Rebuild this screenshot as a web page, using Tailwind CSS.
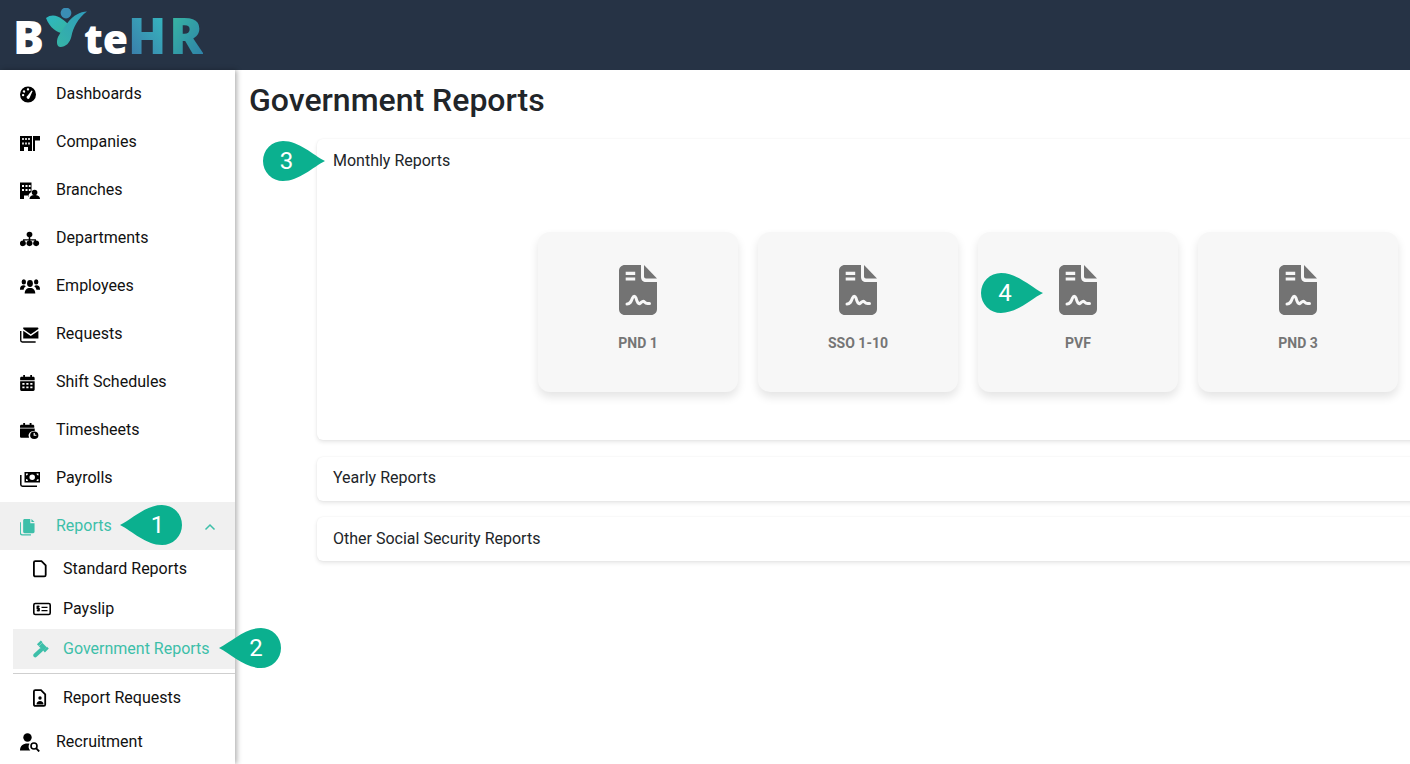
<!doctype html>
<html>
<head>
<meta charset="utf-8">
<script src="https://cdn.jsdelivr.net/npm/@tailwindcss/browser@4"></script>
</head>
<body class="font-['Roboto',sans-serif] bg-white">
<div class="relative w-[1410px] h-[764px] overflow-hidden flex flex-col">
  <header class="h-[70px] shrink-0 bg-[#263345] flex items-center pl-[13px]">
    <div class="flex items-baseline font-['Open_Sans',sans-serif] font-extrabold leading-none">
      <span class="text-white text-[46px] w-[32px]">B</span>
      <svg class="w-[44px] h-[42px] self-center -mt-[12px] shrink-0" viewBox="0 0 44 42">
        <defs>
          <linearGradient id="g1" x1="0" y1="0" x2="1" y2="1"><stop offset="0" stop-color="#2db8c4"/><stop offset="1" stop-color="#37b49e"/></linearGradient>
          <linearGradient id="g2" x1="1" y1="0" x2="0" y2="1"><stop offset="0" stop-color="#2f9cbc"/><stop offset="1" stop-color="#36b5a6"/></linearGradient>
        </defs>
        <circle cx="21" cy="5" r="5.400" fill="#3a8db5"/>
        <path fill="url(#g1)" d="M1 10C6 6 12 7 17 11C20 13 22 15 24 17L20 25C14 26 5 21 1 10Z"/>
        <path fill="url(#g2)" d="M42 3.500C35 3.500 28 8 24 13C20 18 16 23 13 29C11 34 12 39 15.500 39C20.500 39 25 35 26.500 28C28 20 33 10 42 3.500Z"/>
      </svg>
      <span class="text-white text-[41px] -ml-[5px] w-[44px]">te</span>
      <span class="text-[50px] bg-linear-to-tr from-[#3a78a8] to-[#33bcc0] bg-clip-text text-transparent mr-[3px]">H</span>
      <span class="text-[50px] bg-linear-to-br from-[#39bca0] to-[#2f7fa8] bg-clip-text text-transparent">R</span>
    </div>
  </header>
  <div class="flex flex-1 min-h-0">
    <aside class="w-[235px] shrink-0 bg-white shadow-[2px_0_5px_rgba(0,0,0,0.3)] z-10 text-[16px] text-[#111] overflow-hidden">
      <div class="flex items-center h-12 pl-5 gap-4">
        <svg class="w-5 h-5 shrink-0" viewBox="0 0 20 20"><g transform="translate(-2,0.500)"><path fill-rule="evenodd" d="M10 2a8 8 0 1 1 0 16a8 8 0 0 1 0-16ZM9 4.200a1.200 1.200 0 1 0 2 0a1.200 1.200 0 0 0-2 0ZM5 6.300a1.200 1.200 0 1 0 2.200 0.600a1.200 1.200 0 0 0-2.200-.6ZM3.900 10.600a1.200 1.200 0 1 0 2.400 0a1.200 1.200 0 0 0-2.400 0ZM8.600 12.600a1.600 1.600 0 0 0 2.800 1.200L14.600 6.600L13.600 6L9.600 11.200a1.600 1.600 0 0 0-1 1.400Z"/></g></svg>
        <span>Dashboards</span>
      </div>
      <div class="flex items-center h-12 pl-5 gap-4">
        <svg class="w-5 h-5 shrink-0" viewBox="0 0 20 20"><path fill-rule="evenodd" d="M0 4h12v15H8v-4H4v4H0V4ZM2.200 6v2h1.600V6H2.200Zm3 0v2h1.600V6H5.200Zm3 0v2h1.600V6H8.200ZM2.200 10.500v2h1.600v-2H2.200Zm3 0v2h1.600v-2H5.200Zm3 0v2h1.600v-2H8.200Z"/><path d="M13 4h7v4.500h-5V19h-2V4Z"/></svg>
        <span>Companies</span>
      </div>
      <div class="flex items-center h-12 pl-5 gap-4">
        <svg class="w-5 h-5 shrink-0" viewBox="0 0 20 20"><g transform="translate(0,1)"><path fill-rule="evenodd" d="M0 1.500h11.500V11c-2 .8-3.200 2.600-3.200 5H8V14.500H4V18H0V1.500ZM2 4v2h2V4H2Zm3.500 0v2h2V4h-2Zm3.300 0v2h1.800V4H9ZM2 8v2h2V8H2Zm3.500 0v2h2V8h-2Zm3.300 0v2h1.800V8H9Z"/><circle cx="14.600" cy="11.500" r="2.800"/><path d="M9.500 18c0-2.800 2-4 5-4s5.500 1.200 5.500 4H9.500Z"/></g></svg>
        <span>Branches</span>
      </div>
      <div class="flex items-center h-12 pl-5 gap-4">
        <svg class="w-5 h-5 shrink-0" viewBox="0 0 20 20"><g transform="translate(0,2.500) scale(.95,.9)"><circle cx="10" cy="4.500" r="3"/><path d="M9.200 7h1.600v2.800h6V12h-1.500v-.8h-4.500V12H9.200v-.8H4.800v.8H3.200V9.800h6Z"/><circle cx="3" cy="14.300" r="3.100"/><circle cx="10" cy="14.300" r="3.100"/><circle cx="17" cy="14.300" r="3.100"/></g></svg>
        <span>Departments</span>
      </div>
      <div class="flex items-center h-12 pl-5 gap-4">
        <svg class="w-5 h-5 shrink-0" viewBox="0 0 20 20"><g transform="translate(0,-1.500) scale(1,1.200)"><circle cx="3.800" cy="6.200" r="2.200"/><circle cx="16.200" cy="6.200" r="2.200"/><circle cx="10" cy="7.500" r="2.900"/><path d="M0 12.200c0-2 1.300-3.200 3.500-3.200c1 0 1.800.3 2.300.8c-1.300.7-2 1.700-2.200 2.900H0ZM20 12.200c0-2-1.300-3.200-3.500-3.200c-1 0-1.800.3-2.300.8c1.300.7 2 1.700 2.200 2.900H20ZM4.700 15.800c0-3 2-4.600 5.300-4.600s5.300 1.600 5.300 4.600H4.700Z"/></g></svg>
        <span>Employees</span>
      </div>
      <div class="flex items-center h-12 pl-5 gap-4">
        <svg class="w-5 h-5 shrink-0" viewBox="0 0 20 20"><g transform="translate(0,.500) scale(.92,1)"><path d="M3.500 3h15.500c.6 0 1 .4 1 1v.6l-8.300 5.200L3.500 4.600V3Z"/><path d="M3.500 6.200l8.200 5.200 8.300-5.200v7.800H3.500V6.200Z"/><path fill="none" stroke="#000" stroke-width="1.500" d="M.800 6.500v9.300c0 1 .7 1.700 1.700 1.700H17"/></g></svg>
        <span>Requests</span>
      </div>
      <div class="flex items-center h-12 pl-5 gap-4">
        <svg class="w-5 h-5 shrink-0" viewBox="0 0 20 20"><g transform="translate(-.3,2.600) scale(.88,.88)"><path fill-rule="evenodd" d="M4 .500h2v2h6v-2h2v2h1.500c.9 0 1.500.7 1.500 1.500v2.500H.500V4c0-.8.7-1.500 1.500-1.500h2V.500ZM.500 7.500H17v9.500c0 .9-.7 1.500-1.500 1.500H2c-.9 0-1.500-.6-1.500-1.500V7.500ZM3 9.500v2h2.500v-2H3Zm4.500 0v2H10v-2H7.500Zm4.500 0v2h2.500v-2H12ZM3 13.500v2h2.500v-2H3Zm4.500 0v2H10v-2H7.500Zm4.500 0v2h2.500v-2H12Z"/></g></svg>
        <span>Shift Schedules</span>
      </div>
      <div class="flex items-center h-12 pl-5 gap-4">
        <svg class="w-5 h-5 shrink-0" viewBox="0 0 20 20"><g transform="translate(0,2.600) scale(.92,.84)"><path d="M3.500.500h2v2h5v-2h2v2h1.500c.9 0 1.500.7 1.500 1.500v2H0V4c0-.8.7-1.500 1.500-1.500h2V.500ZM0 7h16v3.200a5.500 5.500 0 0 0-6.200 7.800H1.500C.7 18 0 17.300 0 16.500V7Z"/><path fill-rule="evenodd" d="M15.500 10.500a4.500 4.500 0 1 1 0 9a4.500 4.500 0 0 1 0-9ZM14.800 12.500v3.300h3v-1.300h-1.700v-2h-1.300Z"/></g></svg>
        <span>Timesheets</span>
      </div>
      <div class="flex items-center h-12 pl-5 gap-4">
        <svg class="w-5 h-5 shrink-0" viewBox="0 0 20 20"><g transform="translate(0,1)"><path fill-rule="evenodd" d="M4.500 3H20v10.500H4.500V3ZM12.200 5.500a2.700 2.700 0 1 0 0 5.500a2.700 2.700 0 0 0 0-5.500ZM6 4.500v2a2 2 0 0 0 2-2H6Zm10.500 0a2 2 0 0 0 2 2v-2h-2ZM6 10v2h2a2 2 0 0 0-2-2Zm12.500 0a2 2 0 0 0-2 2h2v-2Z"/><path fill="none" stroke="#000" stroke-width="1.500" d="M.800 6v9.500c0 1 .7 1.700 1.700 1.700H17"/></g></svg>
        <span>Payrolls</span>
      </div>
      <div class="flex items-center h-12 pl-5 gap-4 bg-[#f0f0f0] text-[#3dbfa9] relative">
        <svg class="w-5 h-5 shrink-0" viewBox="0 0 20 20"><g transform="translate(-1.600,1.500) scale(.95)"><path fill="#3dbfa9" d="M6.500 1.500h6v4.500h4.500v9c0 .8-.7 1.500-1.500 1.500h-9c-.8 0-1.500-.7-1.500-1.500V3c0-.8.7-1.500 1.500-1.500ZM13.700 1.500l3.300 3.300h-3.300V1.500Z"/><path fill="none" stroke="#3dbfa9" stroke-width="1.300" d="M2 5v11c0 1.200.9 2.200 2.200 2.200h9"/></g></svg>
        <span>Reports</span>
        <svg class="absolute left-[204px] top-[21px] w-3 h-2" viewBox="0 0 12 8"><path fill="none" stroke="#3dbfa9" stroke-width="1.500" d="M1.500 6.500L6 2l4.500 4.500"/></svg>
      </div>
      <div class="flex items-center h-10 pl-[33px] gap-3 -mt-[1px]">
        <svg class="w-[18px] h-[18px] shrink-0" viewBox="0 0 18 18"><path fill="none" stroke="#000" stroke-width="1.800" d="M.9 2.500c0-.8.600-1.400 1.400-1.400h6.200l4.200 4.200v9.700c0 .8-.6 1.400-1.400 1.400H2.300c-.8 0-1.400-.6-1.400-1.400V2.500Z"/></svg>
        <span>Standard Reports</span>
      </div>
      <div class="flex items-center h-10 pl-[33px] gap-3">
        <svg class="w-[18px] h-[18px] shrink-0" viewBox="0 0 18 18"><rect x=".800" y="3.500" width="16.400" height="11" rx="1.500" fill="none" stroke="#000" stroke-width="1.600"/><path fill="none" stroke="#000" stroke-width="1.300" d="M6.500 6.500H4.200v2.100h2v2.100H3.800M5.100 5.600v6M8.500 7.300h6M8.500 10.700h6"/></svg>
        <span>Payslip</span>
      </div>
      <div class="flex items-center h-10 ml-[13px] pl-5 gap-3 bg-[#f0f0f0] text-[#3dbfa9]">
        <svg class="w-[18px] h-[18px] shrink-0" viewBox="0 0 18 18"><g fill="none" stroke="#3dbfa9"><path stroke-width="5" d="M7.500 4.500L12 9"/><path stroke-width="2.500" d="M4.800 5.200L8.700 1.300M11 11.500L14.900 7.600"/><path stroke-width="4" stroke-linecap="round" d="M8 10L2.300 15.300"/></g></svg>
        <span>Government Reports</span>
      </div>
      <div class="ml-[13px] mt-1 border-t border-[#cfcfcf]"></div>
      <div class="flex items-center h-12 pl-[33px] gap-3">
        <svg class="w-[18px] h-[18px] shrink-0" viewBox="0 0 18 18"><g transform="translate(-2,0)"><path fill="none" stroke="#000" stroke-width="1.800" d="M2.900 2.500c0-.8.600-1.400 1.400-1.400h5.700l4.200 4.200v10.200c0 .8-.6 1.400-1.400 1.400H4.300c-.8 0-1.400-.6-1.400-1.400V2.500Z"/><circle cx="9" cy="9" r="1.700"/><path d="M5.500 15.500c0-2.200 1.400-3.500 3.500-3.500s3.500 1.300 3.500 3.500h-7Z"/></g></svg>
        <span>Report Requests</span>
      </div>
      <div class="flex items-center h-10 pl-5 gap-4">
        <svg class="w-5 h-5 shrink-0" viewBox="0 0 20 20"><circle cx="7.500" cy="5.500" r="4.200"/><path d="M0 18.500c0-4.500 3-7 7.500-7c1 0 1.500.1 2 .3a5.500 5.500 0 0 0 .8 6.700H0Z"/><circle cx="14" cy="14" r="3" fill="none" stroke="#000" stroke-width="1.600"/><path stroke="#000" stroke-width="1.800" d="M16 16.200L19.200 19.500"/></svg>
        <span>Recruitment</span>
      </div>
    </aside>
    <main class="flex-1 min-w-0 pl-[14px] overflow-hidden text-[#212529]">
      <h1 class="text-[32px] leading-[38px] font-medium mt-[11px]">Government Reports</h1>
      <div class="ml-[68px] w-[1200px] mt-5 flex flex-col">
        <section class="h-[301px] bg-white rounded-md shadow-[0_2px_4px_rgba(0,0,0,0.1),0_0_2px_rgba(0,0,0,0.06)]">
          <div class="h-[44px] flex items-center pl-4 text-[16px]">Monthly Reports</div>
          <div class="flex gap-5 pl-[221px] mt-[49px]">
            <div class="w-[200px] h-[160px] bg-[#f7f7f7] rounded-xl shadow-[0_5px_10px_rgba(0,0,0,0.11)] flex flex-col items-center pt-[33px]">
              <svg class="w-[38px] h-[50px]" viewBox="0 0 38 50"><path fill="#737373" d="M5 0H22V12C22 15 24 17 27 17H38V44C38 47.500 35.500 50 32 50H6C2.500 50 0 47.500 0 44V6C0 2.500 2.500 0 6 0Z"/><path fill="#737373" d="M25 0L38 13.500H27C26 13.500 25 12.500 25 11.500V0Z"/><path fill="none" stroke="#f7f7f7" stroke-width="3.200" d="M6.700 8.300H16.200M6.700 14H16.200"/><path fill="none" stroke="#f7f7f7" stroke-width="3" stroke-linecap="round" d="M8 39C11 39 12 37 13.500 33C14.500 30.500 16 30.500 17 33C18 37 19.500 39.500 21 38.500C22.500 37.500 23.500 35.500 25 36.500C26 37.500 26.500 38.500 28.500 38.500H30.500"/></svg>
              <span class="mt-5 text-[14px] leading-4 font-bold text-[#757575]">PND 1</span>
            </div>
            <div class="w-[200px] h-[160px] bg-[#f7f7f7] rounded-xl shadow-[0_5px_10px_rgba(0,0,0,0.11)] flex flex-col items-center pt-[33px]">
              <svg class="w-[38px] h-[50px]" viewBox="0 0 38 50"><path fill="#737373" d="M5 0H22V12C22 15 24 17 27 17H38V44C38 47.500 35.500 50 32 50H6C2.500 50 0 47.500 0 44V6C0 2.500 2.500 0 6 0Z"/><path fill="#737373" d="M25 0L38 13.500H27C26 13.500 25 12.500 25 11.500V0Z"/><path fill="none" stroke="#f7f7f7" stroke-width="3.200" d="M6.700 8.300H16.200M6.700 14H16.200"/><path fill="none" stroke="#f7f7f7" stroke-width="3" stroke-linecap="round" d="M8 39C11 39 12 37 13.500 33C14.500 30.500 16 30.500 17 33C18 37 19.500 39.500 21 38.500C22.500 37.500 23.500 35.500 25 36.500C26 37.500 26.500 38.500 28.500 38.500H30.500"/></svg>
              <span class="mt-5 text-[14px] leading-4 font-bold text-[#757575]">SSO 1-10</span>
            </div>
            <div class="w-[200px] h-[160px] bg-[#f7f7f7] rounded-xl shadow-[0_5px_10px_rgba(0,0,0,0.11)] flex flex-col items-center pt-[33px]">
              <svg class="w-[38px] h-[50px]" viewBox="0 0 38 50"><path fill="#737373" d="M5 0H22V12C22 15 24 17 27 17H38V44C38 47.500 35.500 50 32 50H6C2.500 50 0 47.500 0 44V6C0 2.500 2.500 0 6 0Z"/><path fill="#737373" d="M25 0L38 13.500H27C26 13.500 25 12.500 25 11.500V0Z"/><path fill="none" stroke="#f7f7f7" stroke-width="3.200" d="M6.700 8.300H16.200M6.700 14H16.200"/><path fill="none" stroke="#f7f7f7" stroke-width="3" stroke-linecap="round" d="M8 39C11 39 12 37 13.500 33C14.500 30.500 16 30.500 17 33C18 37 19.500 39.500 21 38.500C22.500 37.500 23.500 35.500 25 36.500C26 37.500 26.500 38.500 28.500 38.500H30.500"/></svg>
              <span class="mt-5 text-[14px] leading-4 font-bold text-[#757575]">PVF</span>
            </div>
            <div class="w-[200px] h-[160px] bg-[#f7f7f7] rounded-xl shadow-[0_5px_10px_rgba(0,0,0,0.11)] flex flex-col items-center pt-[33px]">
              <svg class="w-[38px] h-[50px]" viewBox="0 0 38 50"><path fill="#737373" d="M5 0H22V12C22 15 24 17 27 17H38V44C38 47.500 35.500 50 32 50H6C2.500 50 0 47.500 0 44V6C0 2.500 2.500 0 6 0Z"/><path fill="#737373" d="M25 0L38 13.500H27C26 13.500 25 12.500 25 11.500V0Z"/><path fill="none" stroke="#f7f7f7" stroke-width="3.200" d="M6.700 8.300H16.200M6.700 14H16.200"/><path fill="none" stroke="#f7f7f7" stroke-width="3" stroke-linecap="round" d="M8 39C11 39 12 37 13.500 33C14.500 30.500 16 30.500 17 33C18 37 19.500 39.500 21 38.500C22.500 37.500 23.500 35.500 25 36.500C26 37.500 26.500 38.500 28.500 38.500H30.500"/></svg>
              <span class="mt-5 text-[14px] leading-4 font-bold text-[#757575]">PND 3</span>
            </div>
          </div>
        </section>
        <section class="h-[44px] mt-[17px] pb-[2px] bg-white rounded-md shadow-[0_2px_4px_rgba(0,0,0,0.1),0_0_2px_rgba(0,0,0,0.06)] flex items-center pl-4 text-[16px]">Yearly Reports</section>
        <section class="h-[44px] mt-[16px] bg-white rounded-md shadow-[0_2px_4px_rgba(0,0,0,0.1),0_0_2px_rgba(0,0,0,0.06)] flex items-center pl-4 text-[16px]">Other Social Security Reports</section>
      </div>
    </main>
  </div>

  <!-- numbered callouts lying over the page -->
  <div class="absolute left-[120px] top-[505px] w-[62px] h-10 z-20 flex items-center justify-center text-white text-[24px]">
    <svg class="absolute inset-0 w-[62px] h-10" viewBox="0 0 62 40"><path fill="#0bb08f" d="M0 20C12 14 26 0 42 0A20 20 0 0 1 42 40C26 40 12 26 0 20Z"/></svg>
    <span class="relative ml-[13px]">1</span>
  </div>
  <div class="absolute left-[219px] top-[628px] w-[62px] h-10 z-20 flex items-center justify-center text-white text-[24px]">
    <svg class="absolute inset-0 w-[62px] h-10" viewBox="0 0 62 40"><path fill="#0bb08f" d="M0 20C12 14 26 0 42 0A20 20 0 0 1 42 40C26 40 12 26 0 20Z"/></svg>
    <span class="relative ml-[12px]">2</span>
  </div>
  <div class="absolute left-[262px] top-[141px] w-[63px] h-10 z-20 flex items-center justify-center text-white text-[24px]">
    <svg class="absolute inset-0 w-[63px] h-10" viewBox="0 0 63 40"><path fill="#0bb08f" d="M63 20C51 14 37 0 21 0A20 20 0 0 0 21 40C37 40 51 26 63 20Z"/></svg>
    <span class="relative -ml-[14px]">3</span>
  </div>
  <div class="absolute left-[981px] top-[273px] w-[62px] h-10 z-20 flex items-center justify-center text-white text-[24px]">
    <svg class="absolute inset-0 w-[62px] h-10" viewBox="0 0 62 40"><path fill="#0bb08f" d="M62 20C50 14 36 0 20 0A20 20 0 0 0 20 40C36 40 50 26 62 20Z"/></svg>
    <span class="relative -ml-[14px]">4</span>
  </div>
</div>
</body>
</html>
